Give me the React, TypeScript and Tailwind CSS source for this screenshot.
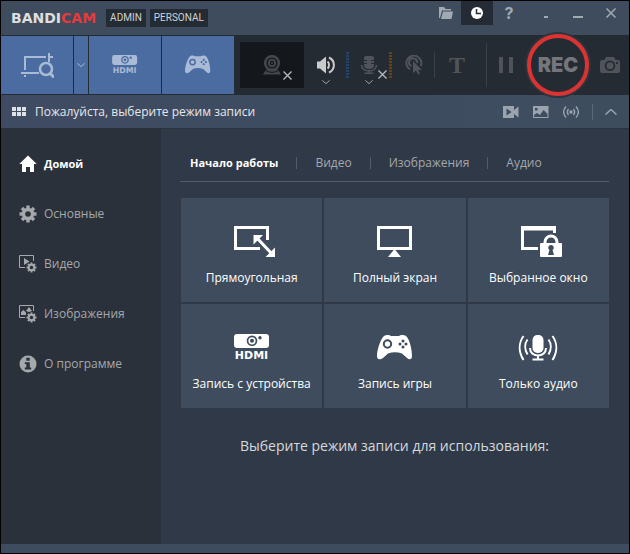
import { useState } from "react";
import type { ReactNode } from "react";

const sidebar = [
  { label: "Домой", icon: <HomeIcon /> },
  { label: "Основные", icon: <SettingsIcon /> },
  { label: "Видео", icon: <VideoSettingsIcon /> },
  { label: "Изображения", icon: <ImageSettingsIcon /> },
  { label: "О программе", icon: <InfoIcon /> },
];

const tabs = ["Начало работы", "Видео", "Изображения", "Аудио"];

const modes = [
  { label: "Прямоугольная", icon: <RectIcon /> },
  { label: "Полный экран", icon: <FullscreenIcon /> },
  { label: "Выбранное окно", icon: <WindowLockIcon /> },
  { label: "Запись с устройства", icon: <HdmiIcon className="h-7 w-9" /> },
  { label: "Запись игры", icon: <GamepadIcon className="h-[26px] w-9" /> },
  { label: "Только аудио", icon: <AudioIcon /> },
];

function Gear({ cx, cy, r, hole }: { cx: number; cy: number; r: number; hole: number }) {
  const ring = (r * 0.74 + hole) / 2;
  return (
    <g stroke="currentColor" fill="none">
      <circle cx={cx} cy={cy} r={ring} strokeWidth={r * 0.74 - hole} />
      {[0, 45, 90, 135, 180, 225, 270, 315].map((a) => (
        <path
          key={a}
          d={`M${cx} ${cy - r * 0.65}V${cy - r}`}
          strokeWidth={r * 0.4}
          transform={`rotate(${a} ${cx} ${cy})`}
        />
      ))}
    </g>
  );
}

function HomeIcon() {
  return (
    <svg viewBox="0 0 18 18" className="size-[18px]" fill="currentColor">
      <path d="M9 0.5 0.3 9H3v8h4v-5h4v5h4V9h2.7z" />
    </svg>
  );
}

function SettingsIcon() {
  return (
    <svg viewBox="0 0 18 18" className="size-[18px]">
      <Gear cx={9} cy={9} r={8.5} hole={2.8} />
    </svg>
  );
}

function VideoSettingsIcon() {
  return (
    <svg viewBox="0 0 18 18" className="size-[18px]" fill="none" stroke="currentColor">
      <path d="M14.5 6V.5H.5v12H6" />
      <path d="M5 3v7l5.5-3.5z" fill="currentColor" stroke="none" />
      <Gear cx={12.5} cy={12.5} r={5} hole={1.8} />
    </svg>
  );
}

function ImageSettingsIcon() {
  return (
    <svg viewBox="0 0 18 18" className="size-[18px]" fill="none" stroke="currentColor">
      <path d="M14.5 6V.5H.5v12H6" />
      <path d="M2 10V7l2.5-2L7 7.5V10zM7 6l3-4 3 4-3 1z" fill="currentColor" stroke="none" />
      <Gear cx={12.5} cy={12.5} r={5} hole={1.8} />
    </svg>
  );
}

function InfoIcon() {
  return (
    <svg viewBox="0 0 18 18" className="size-[18px]">
      <circle cx="9" cy="9" r="8.5" fill="currentColor" />
      <path d="M7.3 2.8h3.4v2.9H7.3zM5.8 7.2h5v5.3h1.4v2H5.8v-2h1.5V9H5.8z" fill="#2b313a" />
    </svg>
  );
}

function RectIcon() {
  return (
    <svg viewBox="0 0 35 32" className="h-8 w-[35px] overflow-visible" fill="none" stroke="currentColor">
      <path d="M26 22.5H1.5v-21h32V14" strokeWidth="3" />
      <path d="m23 12 15 16" strokeWidth="3" />
      <path d="M19.5 9H29l-9.5 9.500zM41 31v-9.500L31.500 31z" fill="currentColor" stroke="none" />
    </svg>
  );
}

function FullscreenIcon() {
  return (
    <svg viewBox="0 0 35 32" className="h-8 w-[35px]">
      <path d="M1.500 1.500h32v21h-32z" fill="none" stroke="currentColor" strokeWidth="3" />
      <path d="M17.500 23 24 31H11z" fill="currentColor" />
    </svg>
  );
}

function WindowLockIcon() {
  return (
    <svg viewBox="0 0 35 32" className="h-8 w-[35px] overflow-visible" fill="none" stroke="currentColor">
      <path d="M17 22.500H1.500v-21h32V7" strokeWidth="3" />
      <path d="M0 2.500h35" strokeWidth="4" />
      <path d="M24 18v-2a6 6 0 0 1 12 0v2" strokeWidth="3" />
      <rect x="19" y="17" width="22" height="14" rx="1" fill="currentColor" stroke="none" />
      <path d="M30 19a2.700 2.700 0 0 1 1.500 5l1.500 5h-6l1.500-5A2.700 2.700 0 0 1 30 19z" fill="#3e4c5e" stroke="none" />
    </svg>
  );
}

function HdmiIcon({ className }: { className: string }) {
  return (
    <svg viewBox="0 0 36 28" className={className} fill="currentColor">
      <path
        fillRule="evenodd"
        d="M3 0h29q3 0 3 3v8q0 3-3 3H3q-3 0-3-3V3q0-3 3-3zm15 1.500a5.300 5.300 0 1 0 0 10.600 5.300 5.300 0 0 0 0-10.600zm8 .500a1.700 1.700 0 1 0 0 3.400 1.700 1.700 0 0 0 0-3.400z"
      />
      <circle cx="18" cy="6.800" r="2.800" fill="none" stroke="currentColor" strokeWidth="1.600" />
      <text x="17.500" y="25" textAnchor="middle" fontSize="11" fontWeight="700" fontFamily="DejaVu Sans, sans-serif">
        HDMI
      </text>
    </svg>
  );
}

function GamepadIcon({ className }: { className: string }) {
  return (
    <svg viewBox="0 0 36 26" className={className} fill="currentColor">
      <path
        fillRule="evenodd"
        d="M6 2C8-.500 12-.500 14 1h8c2-1.500 6-1.500 8 1 3 4 5 13 5 19 0 4-3 4-5 2l-5-4.500Q18 16 11 18.500L6 23c-3 2-6 2-6-2C0 15 3 6 6 2zm4.500 2.300a4.700 4.700 0 1 0 0 9.400 4.700 4.700 0 0 0 0-9.400zm15.500.200a1.500 1.500 0 1 0 0 3 1.500 1.500 0 0 0 0-3zm-3 3a1.500 1.500 0 1 0 0 3 1.500 1.500 0 0 0 0-3zm6 0a1.500 1.500 0 1 0 0 3 1.500 1.500 0 0 0 0-3zm-3 3a1.500 1.500 0 1 0 0 3 1.500 1.500 0 0 0 0-3z"
      />
      <circle cx="10.500" cy="9" r="2.700" />
    </svg>
  );
}

function AudioIcon() {
  return (
    <svg viewBox="0 0 40 26" className="h-[26px] w-10" fill="none" stroke="currentColor" strokeWidth="2">
      <rect x="14.500" y="0" width="11" height="18" rx="5" fill="currentColor" stroke="none" />
      <path d="M12 13c0 10 16 10 16 0M20 20v4M14.500 24.500h11" />
      <path d="M9.500 4.500c-3 4-3 10 0 15M30.500 4.500c3 4 3 10 0 15M5.500 1c-5 7-5 16 0 24M34.500 1c5 7 5 16 0 24" />
    </svg>
  );
}

function RegionIcon() {
  return (
    <svg viewBox="0 0 34 26" className="h-[26px] w-[34px]" fill="none" stroke="currentColor" strokeWidth="2">
      <path d="M5 18V5h21M29 1v9M29 5h4" />
      <path d="M1 21h18M5 23v2" />
      <circle cx="26" cy="17" r="6" strokeWidth="2.500" />
      <path d="m30 21 4 4.500" strokeWidth="3" />
    </svg>
  );
}

function WebcamIcon() {
  return (
    <svg viewBox="0 0 20 20" className="h-5 w-5" fill="none" stroke="currentColor">
      <circle cx="10" cy="8" r="6.800" strokeWidth="2.500" />
      <circle cx="10" cy="8" r="3.200" strokeWidth="2" />
      <circle cx="10" cy="8" r="1" fill="currentColor" stroke="none" />
      <path d="M4 14.500h12l3 5H1z" fill="currentColor" stroke="none" />
      <path d="M3 15c4 3 10 3 14 0" stroke="#14171c" />
    </svg>
  );
}

function SpeakerIcon() {
  return (
    <svg viewBox="0 0 18 18" className="size-[18px]" fill="none" stroke="currentColor" strokeWidth="2">
      <path d="M0 5.500h3L9 .500v17l-6-5H0z" fill="currentColor" stroke="none" />
      <path d="M10.500 5.500c2 1.500 2 5.500 0 7M12 1.500c6.500 3 6.500 12 0 15" />
    </svg>
  );
}

function MicIcon() {
  return (
    <svg viewBox="0 0 18 18" className="size-[18px]" fill="none" stroke="currentColor">
      <path d="M6 0h6q2 0 2 2v7q0 4-5 4t-5-4V2q0-2 2-2z" fill="currentColor" stroke="none" />
      <path d="M4 4.500h3M11 4.500h3M4 7.500h3M11 7.500h3" stroke="#252b33" />
      <path d="M1.500 9c0 8 15 8 15 0M9 14v3M4.500 17.200h9" strokeWidth="1.500" />
    </svg>
  );
}

function ClickIcon() {
  return (
    <svg viewBox="0 0 18 20" className="h-5 w-[18px]" fill="none" stroke="currentColor" strokeWidth="2">
      <path d="M5 14.500A7.500 7.500 0 1 1 15.800 11M6.500 11A4 4 0 1 1 12 8" />
      <path d="M8 6v12l3-2.500 2 4 2-1-2-3.500h4z" fill="currentColor" stroke="none" />
    </svg>
  );
}

function CameraIcon() {
  return (
    <svg viewBox="0 0 20 16" className="h-4 w-5" fill="currentColor">
      <path
        fillRule="evenodd"
        d="M6 0h8l1.500 3H18q2 0 2 2v9q0 2-2 2H2q-2 0-2-2V5q0-2 2-2h2.500zm4 3.500a5.300 5.300 0 1 0 0 10.600 5.300 5.300 0 0 0 0-10.600zM16 5v2h2V5z"
      />
      <circle cx="10" cy="8.800" r="3.500" />
    </svg>
  );
}

function Chevron({ up, className }: { up?: boolean; className: string }) {
  return (
    <svg viewBox="0 0 12 6" className={className} fill="none" stroke="currentColor" strokeWidth="1.500">
      <path d={up ? "M.500 5.500 6 .500l5.500 5" : "M.500.500 6 5.500l5.500-5"} />
    </svg>
  );
}

function Cross({ className }: { className: string }) {
  return (
    <svg viewBox="0 0 10 10" className={className} fill="none" stroke="currentColor" strokeWidth="1.500">
      <path d="m.500.500 9 9M9.500.500l-9 9" />
    </svg>
  );
}

function Meter({ className }: { className: string }) {
  return (
    <div className={`flex w-[3px] flex-col gap-px ${className}`}>
      {Array.from({ length: 9 }, (_, i) => (
        <span key={i} className="h-0.5 bg-current" />
      ))}
    </div>
  );
}

function Btn({ label, className, children }: { label: string; className?: string; children: ReactNode }) {
  return (
    <button aria-label={label} className={`flex items-center justify-center ${className ?? ""}`}>
      {children}
    </button>
  );
}

function TitleBar() {
  return (
    <header className="flex h-[34px] items-start bg-[#3e4c5e] text-[#a1a9b3]">
      <h1 className="ml-2.5 flex h-[34px] items-center font-['DejaVu_Sans',sans-serif] text-sm font-bold text-[#dedede]">
        BANDI<span className="text-[#e53a3c]">CAM</span>
      </h1>
      <div className="ml-2.5 flex h-[34px] items-center gap-1 font-[Roboto,sans-serif] text-[10px] text-[#d0d3d6]">
        <span className="bg-[#252b33] px-1 leading-[18px]">ADMIN</span>
        <span className="bg-[#252b33] px-1 leading-[18px]">PERSONAL</span>
      </div>
      <div className="ml-auto flex h-6 items-stretch">
        <Btn label="Папка" className="w-8 pl-0.5">
          <svg viewBox="0 0 14 12" className="h-3 w-3.5" fill="currentColor">
            <path d="M0 0h5l1.500 2H12v1.500H3L1 11H0zM4 4.500h10L12.500 12H2z" />
          </svg>
        </Btn>
        <Btn label="Таймер" className="w-8 bg-[#252b35] text-white">
          <svg viewBox="0 0 12 12" className="size-3">
            <circle cx="6" cy="6" r="6" fill="currentColor" />
            <path d="M5.500 2v4.500H10" fill="none" stroke="#252b35" strokeWidth="1.500" />
          </svg>
        </Btn>
        <Btn label="Помощь" className="w-8 font-[Inter,sans-serif] text-base font-bold">
          ?
        </Btn>
        <Btn label="В трей" className="w-10 pt-2 pl-0.5">
          <span className="h-0.5 w-1 bg-current" />
        </Btn>
        <Btn label="Свернуть" className="w-6 pt-2 pl-0.5">
          <span className="h-0.5 w-2.5 bg-current" />
        </Btn>
        <Btn label="Закрыть" className="ml-1 w-9">
          <Cross className="size-2.5" />
        </Btn>
      </div>
    </header>
  );
}

function Toolbar() {
  return (
    <div className="flex h-[60px] items-center bg-[#252b33] text-[#505359]">
      <div className="flex h-[58px] gap-px text-[#a9bbd6]">
        <Btn label="Область" className="w-[72px] bg-[#4a6ca0]">
          <RegionIcon />
        </Btn>
        <Btn label="Выбор области" className="w-3.5 bg-[#4a6ca0]">
          <Chevron className="h-1 w-2" />
        </Btn>
        <Btn label="Устройство" className="w-[72px] bg-[#4a6ca0]">
          <HdmiIcon className="h-5 w-[26px]" />
        </Btn>
        <Btn label="Игра" className="w-[72px] bg-[#4a6ca0]">
          <GamepadIcon className="h-5 w-[26px]" />
        </Btn>
      </div>
      <div className="ml-1.5 flex flex-1 items-center">
        <Btn label="Веб-камера" className="relative h-[46px] w-16 bg-[#14171c] text-[#44484d]">
          <WebcamIcon />
          <Cross className="absolute right-3 bottom-2 size-[9px] text-[#b5b8bb]" />
        </Btn>
        <Btn label="Звук" className="relative ml-3 h-9 w-5 text-[#cbcbcb]">
          <SpeakerIcon />
          <Chevron className="absolute -bottom-px h-1 w-2 text-[#a0a3a6]" />
        </Btn>
        <Meter className="ml-2.5 text-[#1f456c]" />
        <Btn label="Микрофон" className="relative ml-2.5 h-9 w-5">
          <MicIcon />
          <Chevron className="absolute -bottom-px h-1 w-2 text-[#a0a3a6]" />
          <Cross className="absolute -right-2 bottom-1 size-[9px] text-[#b5b8bb]" />
        </Btn>
        <Meter className="ml-2.5 text-[#6d410f]" />
        <Btn label="Эффекты мыши" className="ml-3 w-5">
          <ClickIcon />
        </Btn>
        <span className="ml-2.5 h-[26px] w-px bg-[#3a4046]" />
        <Btn label="Текст" className="ml-3 w-5 font-['Liberation_Serif',serif] text-2xl leading-none font-bold">
          T
        </Btn>
      </div>
      <span className="h-11 w-px bg-[#3a4046]" />
      <Btn label="Пауза" className="w-10 gap-1.5 pr-0.5">
        <span className="h-4 w-1 bg-current" />
        <span className="h-4 w-1 bg-current" />
      </Btn>
      <button className="relative z-10 -my-1 flex size-[62px] items-center justify-center rounded-full border-4 border-[#da3432] bg-[#252b33] font-[Inter,sans-serif] text-xl font-black text-[#74767b] ring-2 ring-[#2c343e]">
        REC
      </button>
      <Btn label="Снимок" className="mr-[9px] ml-[11px] w-5">
        <CameraIcon />
      </Btn>
    </div>
  );
}

function InfoBar() {
  return (
    <div className="flex h-[34px] items-center border-b border-[#2b333f] bg-linear-to-r from-[#3e4b63] to-[#3e4d5e] text-[#9ba4ae]">
      <div className="ml-[11px] grid grid-cols-3 gap-px">
        {Array.from({ length: 6 }, (_, i) => (
          <span key={i} className="size-1 bg-[#dfe2e5]" />
        ))}
      </div>
      <p className="ml-[9px] text-[#e6e8ea]">Пожалуйста, выберите режим записи</p>
      <div className="ml-auto flex items-center">
        <Btn label="Видео" className="w-[30px]">
          <svg viewBox="0 0 16 12" className="h-3 w-4" fill="currentColor">
            <path fillRule="evenodd" d="M0 0h11v4l4.500-3.500v11L11 8v4H0zm3.500 2.500v7L8.500 6z" />
          </svg>
        </Btn>
        <Btn label="Изображения" className="w-[30px]">
          <svg viewBox="0 0 16 12" className="h-3 w-4" fill="currentColor">
            <path fillRule="evenodd" d="M0 0h15.500v12H0zm1 11h13.500V8L10.500 4 7 9 4 7 1 9zM2 2v2.500h2.500V2z" />
          </svg>
        </Btn>
        <Btn label="Аудио" className="w-[30px]">
          <svg viewBox="0 0 16 12" className="h-3 w-4" fill="none" stroke="currentColor" strokeWidth="1.400">
            <circle cx="8" cy="6" r="1.800" fill="currentColor" stroke="none" />
            <path d="M5.500 3c-1.500 2-1.500 4 0 6M10.500 3c1.500 2 1.500 4 0 6M3 .500c-3 3.500-3 7.500 0 11M13 .500c3 3.500 3 7.500 0 11" />
          </svg>
        </Btn>
        <span className="ml-1.5 h-4 w-px bg-[#5c6876]" />
        <Btn label="Свернуть панель" className="w-9">
          <Chevron up className="h-1.5 w-3" />
        </Btn>
      </div>
    </div>
  );
}

export default function App() {
  const [section, setSection] = useState(0);
  const [tab, setTab] = useState(0);

  return (
    <div className="flex min-h-screen flex-col border border-black bg-[#303947] font-['Open_Sans','Noto_Sans',sans-serif] text-xs leading-4">
      <TitleBar />
      <Toolbar />
      <InfoBar />

      <div className="flex flex-1">
        <nav className="w-40 bg-[#2b313a] pt-2.5">
          {sidebar.map((s, i) => (
            <button
              key={s.label}
              onClick={() => setSection(i)}
              className={`flex h-[50px] w-full items-center gap-[7px] pl-[18px] text-left ${
                section === i ? "text-[11px] font-bold text-white" : "text-[#a5a8ac]"
              }`}
            >
              {s.icon}
              {s.label}
            </button>
          ))}
        </nav>

        <main className="flex-1 pt-5 pr-5 pl-[19px]">
          <div className="flex h-[33px] items-center border-b border-[#555c67] pb-1">
            {tabs.map((t, i) => (
              <div key={t} className="flex items-center">
                {i > 0 && <span className="h-3 w-px bg-[#555c67]" />}
                <button
                  onClick={() => setTab(i)}
                  className={`pr-[18px] ${i === 0 ? "pl-2.5" : "pl-[18px]"} ${
                    tab === i ? "text-[11px] font-bold text-white" : "text-[#a5a8ac]"
                  }`}
                >
                  {t}
                </button>
              </div>
            ))}
          </div>

          <div className="mt-4 ml-px grid grid-cols-3 gap-0.5">
            {modes.map((m) => (
              <button
                key={m.label}
                className="flex flex-col items-center bg-[#3e4c5e] pt-7 pb-4 text-white"
              >
                <span className="flex h-8 items-center">{m.icon}</span>
                <span className="mt-3">{m.label}</span>
              </button>
            ))}
          </div>

          <p className="mt-7 text-center text-sm text-[#d6d8da]">Выберите режим записи для использования:</p>
        </main>
      </div>

      <footer className="h-[9px] bg-[#3e4c60]" />
    </div>
  );
}
